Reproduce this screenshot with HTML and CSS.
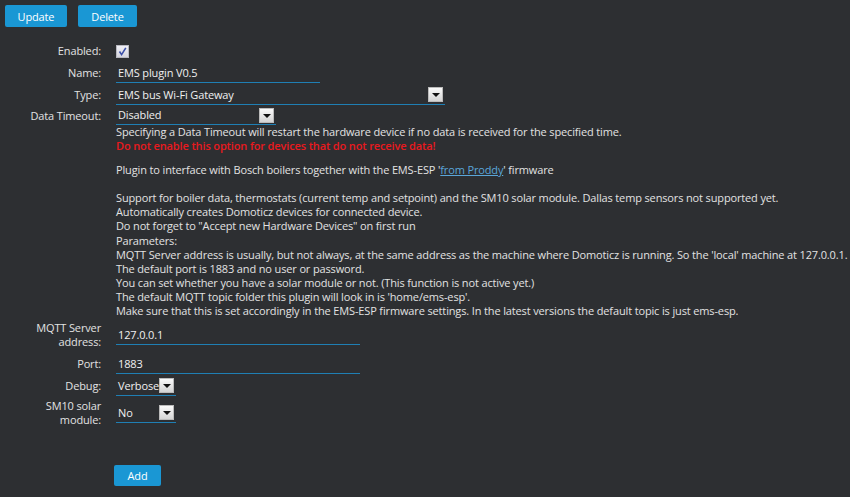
FILE: index.html
```html
<!DOCTYPE html>
<html>
<head>
<meta charset="utf-8">
<link rel="stylesheet" href="styles.css">
</head>
<body>
<div class="page">
  <div class="toolbar">
    <button class="btn btn-update">Update</button>
    <button class="btn btn-delete">Delete</button>
  </div>
  <div class="form">
    <div class="row row-check">
      <div class="label">Enabled:</div>
      <div class="val">
        <span class="checkbox"><svg width="11" height="11" viewBox="0 0 11 11"><path d="M2.5 5.5 L4.6 8.6 L8.8 1.8" fill="none" stroke="#3b4fa8" stroke-width="1.6"/></svg></span>
      </div>
    </div>
    <div class="row">
      <div class="label">Name:</div>
      <div class="val"><div class="input w-name">EMS plugin V0.5</div></div>
    </div>
    <div class="row">
      <div class="label">Type:</div>
      <div class="val"><div class="select w-type"><span>EMS bus Wi-Fi Gateway</span><span class="arrow"></span></div></div>
    </div>
    <div class="row row-top">
      <div class="label">Data Timeout:</div>
      <div class="val">
        <div class="select w-timeout"><span>Disabled</span><span class="arrow"></span></div>
        <div class="desc">
          <div>Specifying a Data Timeout will restart the hardware device if no data is received for the specified time.</div>
          <div class="warn">Do not enable this option for devices that do not receive data!</div>
          <p class="plugin">Plugin to interface with Bosch boilers together with the EMS-ESP '<a href="#">from Proddy</a>' firmware</p>
          <div class="blank"></div>
          <div>Support for boiler data, thermostats (current temp and setpoint) and the SM10 solar module. Dallas temp sensors not supported yet.</div>
          <div>Automatically creates Domoticz devices for connected device.</div>
          <div>Do not forget to "Accept new Hardware Devices" on first run</div>
          <div>Parameters:</div>
          <div>MQTT Server address is usually, but not always, at the same address as the machine where Domoticz is running. So the 'local' machine at 127.0.0.1.</div>
          <div>The default port is 1883 and no user or password.</div>
          <div>You can set whether you have a solar module or not. (This function is not active yet.)</div>
          <div>The default MQTT topic folder this plugin will look in is 'home/ems-esp'.</div>
          <div>Make sure that this is set accordingly in the EMS-ESP firmware settings. In the latest versions the default topic is just ems-esp.</div>
        </div>
      </div>
    </div>
    <div class="row row-mqtt">
      <div class="label">MQTT Server<br>address:</div>
      <div class="val"><div class="input w-mqtt">127.0.0.1</div></div>
    </div>
    <div class="row row-port">
      <div class="label">Port:</div>
      <div class="val"><div class="input w-mqtt">1883</div></div>
    </div>
    <div class="row row-debug">
      <div class="label">Debug:</div>
      <div class="val"><div class="select w-debug"><span>Verbose</span><span class="arrow"></span></div></div>
    </div>
    <div class="row row-sm10">
      <div class="label">SM10 solar<br>module:</div>
      <div class="val"><div class="select w-sm10"><span>No</span><span class="arrow"></span></div></div>
    </div>
  </div>
  <div class="footer">
    <button class="btn btn-add">Add</button>
  </div>
</div>
</body>
</html>
```

FILE: styles.css
```css
html, body {
  margin: 0;
  padding: 0;
  background: #2d2f32;
  height: 100%;
}
body {
  font-family: "Open Sans", "DejaVu Sans", sans-serif;
  font-size: 11px;
  letter-spacing: -0.14px;
  color: #e2e2e2;
}
.page {
  padding: 5px 0 0 5px;
}
.toolbar {
  display: flex;
  gap: 11px;
}
.btn {
  background: #1a97d4;
  color: #fff;
  border: none;
  border-radius: 2px;
  font-family: "Open Sans", "DejaVu Sans", sans-serif;
  font-size: 11px;
  letter-spacing: -0.14px;
  height: 22px;
  padding: 0;
}
.btn-update { width: 62px; }
.btn-delete { width: 59px; }
.form {
  margin-top: 13px;
  display: grid;
  grid-template-columns: 96px 1fr;
  column-gap: 15px;
}
.row {
  display: contents;
}
.label {
  text-align: right;
  line-height: 14px;
  display: flex;
  align-items: center;
  justify-content: flex-end;
}
.val {
  display: flex;
  flex-direction: column;
  justify-content: center;
}
.row-check .label, .row-check .val { height: 22px; }
.row .label, .row .val { min-height: 22px; }
.row-top .label { align-items: flex-start; padding-top: 3px; }
.checkbox {
  width: 11px;
  height: 11px;
  border: 1px solid #b8b8c0;
  background: linear-gradient(#f0f0f6, #d4d4de);
  display: flex;
  align-items: center;
  justify-content: center;
}
.input, .select {
  height: 18px;
  line-height: 18px;
  border-bottom: 1px solid #1f7fb4;
  padding-left: 2px;
  box-sizing: content-box;
  color: #f0f0f0;
  font-size: 11px;
}
.select {
  display: flex;
  align-items: center;
  justify-content: space-between;
}
.arrow {
  width: 13px;
  height: 13px;
  background: linear-gradient(#fafafa, #d4d4d4);
  border: 1px solid #bbb;
  margin-right: 2px;
  position: relative;
}
.arrow::after {
  content: "";
  position: absolute;
  left: 3px;
  top: 5px;
  border-left: 4px solid transparent;
  border-right: 4px solid transparent;
  border-top: 4px solid #111;
}
.w-name { width: 202px; }
.w-type { width: 327px; }
.w-timeout { width: 158px; }
.w-mqtt { width: 242px; }
.w-debug { width: 58px; }
.w-sm10 { width: 58px; }
.row-top .val { justify-content: flex-start; }
.desc {
  line-height: 14.1px;
  padding-top: 0;
}
.warn {
  color: #e8191e;
  font-weight: 600;
}
.desc p {
  margin: 10px 0 0 0;
}
.blank { height: 14px; }
.desc a {
  color: #5aa6d9;
}
.row-mqtt .label, .row-mqtt .val { height: 28px; margin-top: 3px; }
.row-port .label, .row-port .val { height: 22px; margin-top: 4px; }
.row-debug .label, .row-debug .val { height: 22px; }
.row-sm10 .label, .row-sm10 .val { height: 28px; margin-top: 2px; }
.footer {
  margin-top: 38px;
  padding-left: 109px;
}
.btn-add {
  width: 47px;
  height: 21px;
}
```
